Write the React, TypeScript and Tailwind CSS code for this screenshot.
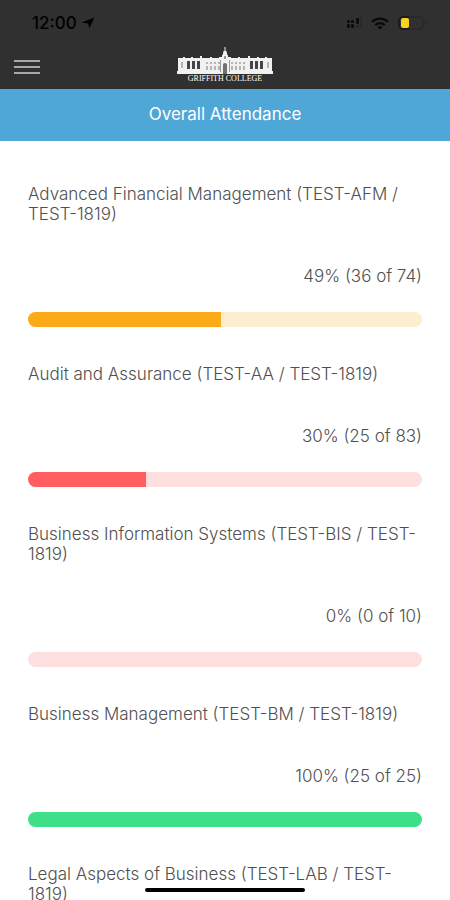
type Course = {
  name: string;
  percent?: number;
  summary?: string;
  fill?: string;
  track?: string;
};

const courses: Course[] = [
  {
    name: 'Advanced Financial Management (TEST-AFM / TEST-1819)',
    percent: 49,
    summary: '49% (36 of 74)',
    fill: 'bg-[#fbab18]',
    track: 'bg-[#fdeed0]',
  },
  {
    name: 'Audit and Assurance (TEST-AA / TEST-1819)',
    percent: 30,
    summary: '30% (25 of 83)',
    fill: 'bg-[#ff5f60]',
    track: 'bg-[#fddfe0]',
  },
  {
    name: 'Business Information Systems (TEST-BIS / TEST-1819)',
    percent: 0,
    summary: '0% (0 of 10)',
    fill: 'bg-[#ff5f60]',
    track: 'bg-[#fddfe0]',
  },
  {
    name: 'Business Management (TEST-BM / TEST-1819)',
    percent: 100,
    summary: '100% (25 of 25)',
    fill: 'bg-[#3ddf88]',
    track: 'bg-[#d8f9e7]',
  },
  { name: 'Legal Aspects of Business (TEST-LAB / TEST-1819)' },
];

function StatusBar() {
  return (
    <div className="flex h-[46px] items-center justify-between pl-8 pr-[22px] text-black">
      <div className="flex items-center gap-1">
        <span className="text-[17px] font-medium leading-5">12:00</span>
        <svg width="14" height="12" viewBox="0 0 14 12" fill="currentColor" aria-hidden="true">
          <path d="M13.5.5 8.2 11.5 7.3 6.4.5 5.4z" />
        </svg>
      </div>
      <div className="flex items-center gap-2">
        <svg width="20" height="14" viewBox="0 0 20 14" aria-hidden="true">
          <g fill="#0c0c0c">
            <rect x="4" y="4" width="3" height="3" rx="1" />
            <rect x="8" y="4" width="3" height="3" rx="1" />
            <rect x="4" y="8" width="3" height="4" rx="1" />
            <rect x="8" y="8" width="3" height="4" rx="1" />
            <rect x="13" y="2" width="3" height="6" rx="1" />
          </g>
          <rect x="13" y="9" width="3" height="3" rx="1" fill="#242424" />
          <rect x="17" y="1" width="2" height="11" rx="1" fill="#292929" />
        </svg>
        <svg width="18" height="13" viewBox="0 0 18 13" fill="none" stroke="#0a0a0a" strokeWidth="2.300" aria-hidden="true">
          <path d="M1.200 4.900a11 11 0 0 1 15.600 0" />
          <path d="M4.300 8.100a6.600 6.600 0 0 1 9.400 0" />
          <path d="M9 12.600 6.600 10.300a3.400 3.400 0 0 1 4.800 0z" fill="#0a0a0a" stroke="none" />
        </svg>
        <svg width="31" height="14" viewBox="0 0 31 14" aria-hidden="true">
          <rect x="2" y="1" width="24" height="12" rx="4" fill="none" stroke="#272727" strokeWidth="1.500" />
          <path d="M12 1H6a4 4 0 0 0-4 4v4a4 4 0 0 0 4 4h6" fill="none" stroke="#191919" strokeWidth="1.500" />
          <path d="M28 5v4c1.300-.5 1.800-1.200 1.800-2S29.300 5.500 28 5z" fill="#242424" />
          <rect x="4" y="2" width="8" height="10" rx="2" fill="#f7d31c" />
        </svg>
      </div>
    </div>
  );
}

function Logo() {
  const sideWindows = [11, 16, 21, 74, 79, 84];
  const innerWindows = [30, 34, 38, 42, 55, 59, 63, 67];

  return (
    <a href="#" className="flex flex-col items-center text-white">
      <svg width="98" height="29" viewBox="0 0 98 29" fill="#f1f1f1" aria-hidden="true">
        {/* Tower */}
        <path d="M48.500 1h1v5h-1zM47.500 5h3l1 5h-5z" />
        <path d="M46 9h6v5h-6z" />
        {/* Roof line */}
        <path d="M2 14v-2h5v-1h2v1h6v-1h2v1h7v-2h2v2h8v-1h2v1h7v-1h12v1h7v-1h2v1h8v-2h2v2h7v-1h2v1h6v-1h2v1h5v2z" />
        <rect x="2" y="13" width="94" height="14" />
        <path d="M1 25h96v3H1z" />
        <g fill="#454545">
          {sideWindows.map((x) => (
            <rect key={x} x={x} y="15" width="3" height="8" />
          ))}
        </g>
        <g fill="#b5b5b5">
          <rect x="5" y="16" width="2" height="6" />
          <rect x="91" y="16" width="2" height="6" />
          {innerWindows.map((x) => (
            <rect key={x} x={x} y="16" width="2" height="2" />
          ))}
          {innerWindows.map((x) => (
            <rect key={x} x={x} y="20" width="2" height="4" />
          ))}
        </g>
        <path d="M47 28v-9a2 2 0 0 1 4 0v9z" fill="#707070" />
        <path d="M44 14h1v12h-1zM53 14h1v12h-1z" fill="#9b9b9b" />
        <path d="M48 10h2v3h-2z" fill="#999" />
      </svg>
      <span className="font-['Liberation_Serif',serif] text-[8px] leading-[8px]">GRIFFITH COLLEGE</span>
    </a>
  );
}

function Header() {
  return (
    <header className="shrink-0 bg-[#303030]">
      <StatusBar />
      <div className="grid h-[43px] grid-cols-[1fr_auto_1fr] items-start px-3.5">
        <button type="button" aria-label="Menu" className="flex w-[26px] flex-col gap-1 pt-3.5">
          <span className="h-0.5 w-full bg-[#a8a8a8]" />
          <span className="h-0.5 w-full bg-[#a8a8a8]" />
          <span className="h-0.5 w-full bg-[#a8a8a8]" />
        </button>
        <Logo />
      </div>
    </header>
  );
}

function CourseItem({ course }: { course: Course }) {
  return (
    <li className="pb-[37px]">
      <h2>{course.name}</h2>
      {course.summary && (
        <>
          <p className="mt-[42px] text-right">{course.summary}</p>
          <div
            role="progressbar"
            aria-label={course.name}
            aria-valuenow={course.percent}
            className={`mt-[26px] h-[15px] overflow-hidden rounded-full ${course.track}`}
          >
            <div className={`h-full ${course.fill}`} style={{ width: `${course.percent}%` }} />
          </div>
        </>
      )}
    </li>
  );
}

export default function App() {
  return (
    <div className="relative flex h-screen flex-col overflow-hidden bg-white font-['Inter',sans-serif]">
      <Header />
      <h1 className="flex h-[52px] shrink-0 items-center justify-center bg-[#4fa7d7] text-[17px] text-white">
        Overall Attendance
      </h1>
      <main className="min-h-0 flex-1 overflow-y-auto px-7 pt-[43px] [scrollbar-width:none]">
        <ul className="text-[17px] font-light leading-5 text-[#505050]">
          {courses.map((course) => (
            <CourseItem key={course.name} course={course} />
          ))}
        </ul>
      </main>
      {/* Home indicator */}
      <div className="absolute bottom-2 left-1/2 h-1 w-40 -translate-x-1/2 rounded-full bg-black" />
    </div>
  );
}
